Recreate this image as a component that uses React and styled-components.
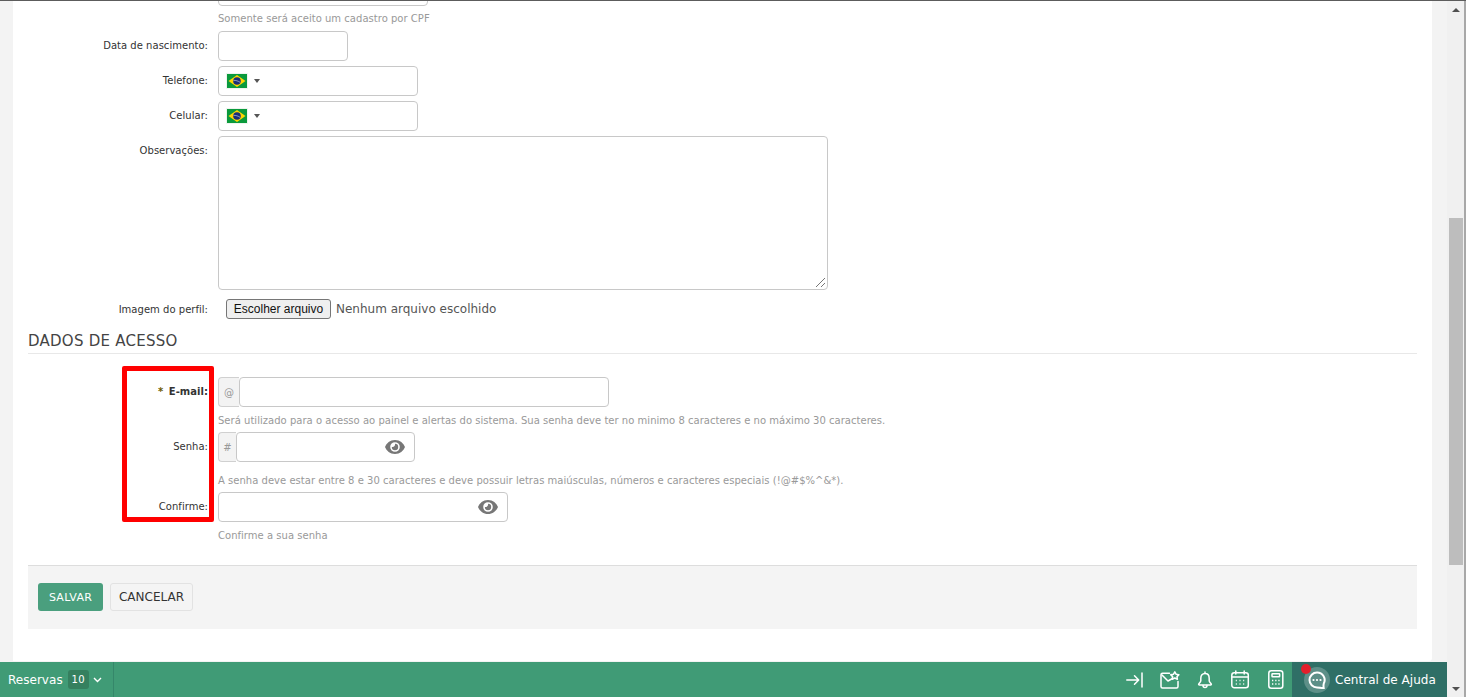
import React from "react";
import styled, { createGlobalStyle } from "styled-components";

const Global = createGlobalStyle`
  html, body { margin: 0; padding: 0; overflow: hidden; background: #fff; }
  * { box-sizing: border-box; }
`;
const Page = styled.div`
  width: 1466px; height: 697px; display: flex; overflow: hidden;
  background: #f3f3f3; border-top: 1px solid #5c5c5c;
  font-family: "DejaVu Sans", Verdana, sans-serif; font-size: 10px; color: #333;
  letter-spacing: .025px;
`;
const Main = styled.div`
  width: 1447px; display: flex; flex-direction: column; height: 100%;
`;
const Viewport = styled.div`
  flex: 1; min-height: 0; overflow: hidden; padding: 0 15px 0 13px;
`;
const Panel = styled.div`
  position: relative; height: 660px; background: #fff; padding: 0 15px;
  border-bottom-right-radius: 3px; overflow: hidden;
`;
const Scrolled = styled.div`
  position: relative; margin-top: -30px;
`;
const Row = styled.div`
  display: flex; align-items: ${(p) => (p.$top ? "flex-start" : "center")};
  margin-top: ${(p) => p.$mt || 5}px;
`;
const Label = styled.label`
  width: 180px; text-align: right; flex: none;
  font-weight: ${(p) => (p.$bold ? 700 : 400)};
  line-height: 12px; padding-top: ${(p) => p.$pt || 0}px;
  & > b { color: #6b5a00; font-weight: 700; margin-right: 2px; }
`;
const Field = styled.div`
  margin-left: 10px; display: flex; flex-direction: column;
`;
const Box = styled.div`
  width: ${(p) => p.$w}px; height: ${(p) => p.$h || 30}px; flex: none;
  border: 1px solid #c8c8c8; border-radius: 4px; background: #fff;
  display: flex; align-items: center;
  justify-content: ${(p) => (p.$end ? "flex-end" : "flex-start")};
`;
const Hint = styled.div`
  color: #999; line-height: 12px; margin-top: ${(p) => p.$mt || 7}px; white-space: nowrap;
`;
const Group = styled.div` display: flex; `;
const Addon = styled.span`
  width: ${(p) => p.$w}px; height: 30px; display: flex; align-items: center; justify-content: center;
  background: #f3f3f3; border: 1px solid #d0d0d0; border-right: 0; border-radius: 4px 0 0 4px;
  color: #999; font-size: 10px;
`;
const Phone = styled.div`
  display: flex; align-items: center; padding-left: 7px; gap: 6px;
`;
const Caret = styled.span`
  width: 0; height: 0; border-left: 3px solid transparent; border-right: 3px solid transparent;
  border-top: 4px solid #555;
`;
const Resize = styled.svg`
  align-self: flex-end; margin: 0 1px 1px 0;
`;
const FileRow = styled.div`
  display: flex; align-items: center; padding-left: 8px; gap: 5px;
  font-size: 12px; color: #555; letter-spacing: 0;
`;
const FileButton = styled.button`
  width: 105px; height: 20px; padding: 0; border: 1px solid #767676; border-radius: 3px;
  background: #efefef; color: #111; font: 12px "Liberation Sans", Arial, sans-serif;
`;
const Heading = styled.h3`
  margin: 12px 0 0; height: 23px; border-bottom: 1px solid #e8e8e8; font-weight: 400;
  font-size: 15px; line-height: 21px; color: #444; letter-spacing: .25px;
`;
const Footer = styled.div`
  margin-top: 23px; height: 64px; background: #f4f4f4; border-top: 1px solid #ddd;
  padding: 17px 10px; display: flex; gap: 7px; align-items: flex-start;
`;
const Save = styled.button`
  height: 28px; width: 65px; border: 0; border-radius: 3px; background: #4a9f7e; color: #fff;
  font: 11px "DejaVu Sans", Verdana, sans-serif; letter-spacing: .25px; padding: 0;
`;
const Cancel = styled.button`
  height: 28px; width: 83px; border: 1px solid #e2e2e2; border-radius: 3px; background: #f4f4f4; color: #333;
  font: 12px "DejaVu Sans", Verdana, sans-serif; padding: 0;
`;
const Annotation = styled.div`
  position: absolute; left: 94px; top: 390px; width: 92px; height: 156px;
  border: 5px solid #ff0000; border-radius: 2px; pointer-events: none;
`;
const Bar = styled.div`
  height: 35px; flex: none; background: #409b76; color: #fff; display: flex; align-items: stretch;
  font-size: 12px;
`;
const Reservas = styled.div`
  width: 114px; display: flex; align-items: center; padding-left: 8px; border-right: 1px solid #35876a;
`;
const Count = styled.span`
  margin-left: 5px; width: 21px; height: 19px; background: #35805f; border-radius: 3px;
  display: flex; align-items: center; justify-content: center; font-size: 10px; letter-spacing: .4px;
`;
const Chevron = styled.svg`
  margin-left: 4px;
`;
const Tools = styled.div`
  margin-left: auto; display: flex; align-items: center; gap: 17px; padding-right: 8px;
`;
const ToolIcon = styled.svg`
  fill: none; stroke: #fff; stroke-width: 1.5; stroke-linecap: round; stroke-linejoin: round; flex: none;
`;
const Help = styled.div`
  position: relative; width: 155px; background: #2f6f66; display: flex; align-items: center;
  padding-left: 12px; gap: 5px;
`;
const HelpIcon = styled.span`
  width: 26px; height: 26px; border-radius: 50%; background: #5d8f88;
  display: flex; align-items: center; justify-content: center;
`;
const Dot = styled.span`
  position: absolute; left: 9px; top: 2px; width: 10px; height: 10px; border-radius: 50%; background: #e3202c;
`;
const Scrollbar = styled.div`
  width: 19px; height: 100%; background: #f0f0f0; display: flex; flex-direction: column;
  align-items: stretch; border-right: 2px solid #a8a8a8; padding: 0 1px 0 2px;
`;
const Arrow = styled.span`
  height: 17px; display: flex; align-items: center; justify-content: center; flex: none;
  margin-top: ${(p) => (p.$down ? "auto" : "0")};
  &::before {
    content: ""; border-left: 4px solid transparent; border-right: 4px solid transparent;
    ${(p) => (p.$down ? "border-top: 4px solid #505050;" : "border-bottom: 4px solid #505050;")}
  }
`;
const Thumb = styled.div`
  height: 347px; margin-top: 200px; background: #bdbdbd; flex: none;
`;

const Flag = () => (
  <svg width="22" height="16" viewBox="0 0 22 16">
    <rect x=".5" y=".5" width="21" height="15" fill="#0a9a3c" stroke="#eef5ee" />
    <path d="M11 2 19.500 8 11 14 2.500 8Z" fill="#fdd500" />
    <circle cx="11" cy="8" r="3.800" fill="#1a2d78" />
    <path d="M7.500 7.400c2.200-.2 4.800.6 6.700 2" stroke="#dfe6f0" strokeWidth=".6" fill="none" />
  </svg>
);
const Eye = () => (
  <svg width="20" height="14" viewBox="0 0 20 14" style={{ marginRight: 9 }}>
    <path fillRule="evenodd" fill="#777" d="M10 0C5 0 1.500 3.300 0 7c1.500 3.700 5 7 10 7s8.500-3.300 10-7C18.500 3.300 15 0 10 0ZM10 2.200a4.800 4.800 0 1 1 0 9.600 4.800 4.800 0 0 1 0-9.600Z" />
    <path fill="#777" d="M10 3.800a3.200 3.200 0 1 1-3.200 3.200c1.700.6 3.800-1.200 3.200-3.200Z" />
  </svg>
);
const ArrowLine = () => (
  <ToolIcon width="17" height="16" viewBox="0 0 17 16">
    <path d="M.8 8H12.500M8.500 3.800 12.700 8 8.500 12.200M16 1v14" />
  </ToolIcon>
);
const MailStar = () => (
  <ToolIcon width="20" height="18" viewBox="0 0 20 18">
    <path d="M9.500 2.300H2.500A1.500 1.500 0 0 0 1 3.800v11.700A1.500 1.500 0 0 0 2.500 17h14a1.500 1.500 0 0 0 1.500-1.500V10.500" />
    <path d="M2 4 8 10 12.500 7.500" />
    <path d="M14.800.8l1.400 2.500 2.700.4-1.900 1.900.4 2.600-2.600-1.200-2.600 1.200.4-2.600-1.900-1.900 2.700-.4Z" />
  </ToolIcon>
);
const BellIcon = () => (
  <ToolIcon width="17" height="18" viewBox="0 0 17 18">
    <path d="M8 1v1.500M8 2.500c-2.600 0-4.200 2-4.200 4.700v2.600c0 1.200-1 1.900-2 3.100-.4.600 0 1.100.6 1.100h11.200c.6 0 1-.5.600-1.100-1-1.200-2-1.900-2-3.100V7.200c0-2.700-1.600-4.700-4.200-4.700Z" />
    <path d="M6 14.500a2 2 0 0 0 4 0" />
  </ToolIcon>
);
const CalendarIcon = () => (
  <ToolIcon width="20" height="19" viewBox="1 0 20 19">
    <rect x="1.800" y="2.800" width="16.500" height="15" rx="2.500" />
    <path d="M1.800 7h16.500M5.800 1v3M14.200 1v3" />
    <path d="M5.800 10.500h1M9.500 10.500h1M13.200 10.500h1M5.800 14h1M9.500 14h1M13.200 14h1" strokeLinecap="butt" />
  </ToolIcon>
);
const CalculatorIcon = () => (
  <ToolIcon width="16" height="19" viewBox="0 0 16 19">
    <rect x=".8" y=".8" width="14" height="17.400" rx="2.500" />
    <rect x="4" y="3.800" width="7.600" height="3" rx=".5" />
    <path d="M4 10.500h1.300M7.200 10.500h1.300M10.300 10.500h1.300M4 14h1.300M7.200 14h1.300M10.300 14h1.300" strokeLinecap="butt" />
  </ToolIcon>
);
const Bubble = () => (
  <svg width="18" height="18" viewBox="0 0 18 18">
    <path d="M9 1.500a7.500 7.500 0 1 0 0 15c2 0 4.800.4 6.800.9-.4-1.700-.4-3.400 0-5A7.500 7.500 0 0 0 9 1.500Z" fill="none" stroke="#fff" strokeWidth="2" strokeLinejoin="round" />
    <circle cx="5.500" cy="9" r="1.100" fill="#fff" /><circle cx="9" cy="9" r="1.100" fill="#fff" /><circle cx="12.500" cy="9" r="1.100" fill="#fff" />
  </svg>
);

export default function App() {
  return (
    <Page>
      <Global />
      <Main>
        <Viewport>
          <Panel>
            <Scrolled>
              <Row $top $mt={0}>
                <Label />
                <Field>
                  <Box $w={210} />
                  <Hint>Somente será aceito um cadastro por CPF</Hint>
                </Field>
              </Row>
              <Row $mt={6}>
                <Label>Data de nascimento:</Label>
                <Field><Box $w={130} /></Field>
              </Row>
              <Row>
                <Label>Telefone:</Label>
                <Field><Box $w={200}><Phone><Flag /><Caret /></Phone></Box></Field>
              </Row>
              <Row>
                <Label>Celular:</Label>
                <Field><Box $w={200}><Phone><Flag /><Caret /></Phone></Box></Field>
              </Row>
              <Row $top>
                <Label $pt={9}>Observações:</Label>
                <Field>
                  <Box $w={610} $h={154} $end>
                    <Resize width="11" height="11" viewBox="0 0 11 11">
                      <path d="M1 10 10 1M6 10 10 6" stroke="#777" strokeWidth="1" fill="none" />
                    </Resize>
                  </Box>
                </Field>
              </Row>
              <Row $mt={9}>
                <Label $pt={1}>Imagem do perfil:</Label>
                <Field>
                  <FileRow>
                    <FileButton type="button">Escolher arquivo</FileButton>
                    <span>Nenhum arquivo escolhido</span>
                  </FileRow>
                </Field>
              </Row>
              <Heading>DADOS DE ACESSO</Heading>
              <Row $top $mt={23}>
                <Label $bold $pt={9}><b>* </b>E-mail:</Label>
                <Field>
                  <Group>
                    <Addon $w={21}>@</Addon>
                    <Box $w={370} />
                  </Group>
                  <Hint $mt={8}>Será utilizado para o acesso ao painel e alertas do sistema. Sua senha deve ter no minimo 8 caracteres e no máximo 30 caracteres.</Hint>
                </Field>
              </Row>
              <Row $top $mt={5}>
                <Label $pt={9}>Senha:</Label>
                <Field>
                  <Group>
                    <Addon $w={18}>#</Addon>
                    <Box $w={179} $end><Eye /></Box>
                  </Group>
                  <Hint $mt={13}>A senha deve estar entre 8 e 30 caracteres e deve possuir letras maiúsculas, números e caracteres especiais (!@#$%^&amp;*).</Hint>
                </Field>
              </Row>
              <Row $top $mt={5}>
                <Label $pt={9}>Confirme:</Label>
                <Field>
                  <Box $w={290} $end><Eye /></Box>
                  <Hint $mt={8}>Confirme a sua senha</Hint>
                </Field>
              </Row>
              <Footer>
                <Save type="button">SALVAR</Save>
                <Cancel type="button">CANCELAR</Cancel>
              </Footer>
              <Annotation />
            </Scrolled>
          </Panel>
        </Viewport>
        <Bar>
          <Reservas>
            Reservas
            <Count>10</Count>
            <Chevron width="9" height="6" viewBox="0 0 9 6"><path d="M1 1l3.500 3.500L8 1" fill="none" stroke="#fff" strokeWidth="1.400" /></Chevron>
          </Reservas>
          <Tools>
            <ArrowLine />
            <MailStar />
            <BellIcon />
            <CalendarIcon />
            <CalculatorIcon />
          </Tools>
          <Help>
            <Dot />
            <HelpIcon><Bubble /></HelpIcon>
            Central de Ajuda
          </Help>
        </Bar>
      </Main>
      <Scrollbar>
        <Arrow />
        <Thumb />
        <Arrow $down />
      </Scrollbar>
    </Page>
  );
}
